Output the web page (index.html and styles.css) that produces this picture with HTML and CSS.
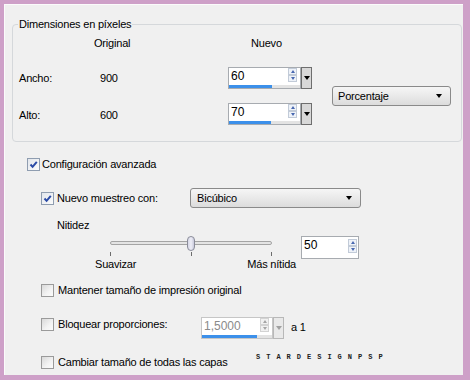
FILE: index.html
```html
<!DOCTYPE html>
<html lang="es">
<head>
<meta charset="utf-8">
<title>Tamaño de imagen</title>
<link rel="stylesheet" href="styles.css">
</head>
<body>
<div class="frame">
  <div class="panel">
    <fieldset class="group">
      <legend>Dimensiones en píxeles</legend>
      <div class="dims">
        <span class="h-orig">Original</span>
        <span class="h-new">Nuevo</span>
        <span class="lbl lbl-w">Ancho:</span>
        <span class="val val-w">900</span>
        <div class="spin spin-w">
          <div class="field">
            <div class="ftop"><span class="num">60</span><span class="arrows"><i class="up"></i><i class="dn"></i></span></div>
            <div class="bar"><b style="width:60%"></b></div>
          </div>
          <div class="ddbtn"><span class="tri"></span></div>
        </div>
        <span class="lbl lbl-h">Alto:</span>
        <span class="val val-h">600</span>
        <div class="spin spin-h">
          <div class="field">
            <div class="ftop"><span class="num">70</span><span class="arrows"><i class="up"></i><i class="dn"></i></span></div>
            <div class="bar"><b style="width:59%"></b></div>
          </div>
          <div class="ddbtn"><span class="tri"></span></div>
        </div>
        <div class="combo unit"><span>Porcentaje</span><span class="tri"></span></div>
      </div>
    </fieldset>

    <div class="row row-config">
      <span class="cb checked"><svg viewBox="0 0 11 11" width="11" height="11"><path d="M2.5 5.5 L4.6 7.8 L8.8 2.8" fill="none" stroke="#2a4aa6" stroke-width="2"/></svg></span>
      <span class="txt">Configuración avanzada</span>
    </div>

    <div class="row row-nuevo">
      <span class="cb checked"><svg viewBox="0 0 11 11" width="11" height="11"><path d="M2.5 5.5 L4.6 7.8 L8.8 2.8" fill="none" stroke="#2a4aa6" stroke-width="2"/></svg></span>
      <span class="txt nuevo-lbl">Nuevo muestreo con:</span>
      <div class="combo method"><span>Bicúbico</span><span class="tri"></span></div>
    </div>

    <div class="row-nit">Nitidez</div>

    <div class="row-sharp">
      <div class="slider">
        <div class="track"><span class="thumb"></span></div>
        <div class="ticks"><i></i><i></i><i></i></div>
        <div class="slabels"><span>Suavizar</span><span>Más nítida</span></div>
      </div>
      <div class="spin spin-sharp">
        <div class="field">
          <div class="ftop"><span class="num">50</span><span class="arrows"><i class="up"></i><i class="dn"></i></span></div>
        </div>
      </div>
    </div>

    <div class="row row-keep">
      <span class="cb"></span>
      <span class="txt">Mantener tamaño de impresión original</span>
    </div>

    <div class="row row-lock">
      <span class="cb"></span>
      <span class="txt lock-lbl">Bloquear proporciones:</span>
      <div class="spin spin-ratio disabled">
        <div class="field">
          <div class="ftop"><span class="num">1,5000</span><span class="arrows"><i class="up"></i><i class="dn"></i></span></div>
          <div class="bar"><b style="width:78%"></b></div>
        </div>
        <div class="ddbtn"><span class="tri"></span></div>
      </div>
      <span class="txt a1">a 1</span>
    </div>

    <div class="row row-all">
      <span class="cb"></span>
      <span class="txt all-lbl">Cambiar tamaño de todas las capas</span>
      <span class="mark">STARDESIGNPSP</span>
    </div>
  </div>
</div>
</body>
</html>
```
FILE: styles.css
```css
* { box-sizing: border-box; }
html, body { margin: 0; padding: 0; }
body {
  width: 470px;
  height: 380px;
  overflow: hidden;
  background: #cea0c8;
  font: 11px/13px "Liberation Sans", Arial, sans-serif;
  letter-spacing: -0.2px;
  color: #000;
}
.frame { padding: 4px 7px 5px 4px; height: 380px; }
.panel {
  height: 371px;
  background: #f0f0f0;
  box-shadow: inset 1px 1px 0 #fbfbfb;
  display: flex;
  flex-direction: column;
}

/* group box */
.group {
  margin: 14px 1px 0 8px;
  padding: 0 0 16px 0;
  border: 1px solid #d5d8db;
  border-radius: 4px;
  min-width: 0;
}
.group legend {
  margin-left: 5px;
  padding: 0 1px;
  line-height: 13px;
}
.dims {
  display: grid;
  grid-template-columns: 67px 62px 86px 84px 1fr;
  grid-template-rows: 24px 12px 22px 14px 22px;
  align-items: center;
}
.h-orig { grid-column: 2; grid-row: 1; padding-left: 14px; }
.h-new { grid-column: 4; grid-row: 1; padding-left: 23px; }
.lbl { grid-column: 1; padding-left: 6px; }
.val { grid-column: 2; padding-left: 20px; }
.lbl-w, .val-w { grid-row: 3; }
.lbl-h, .val-h { grid-row: 5; padding-top: 2px; }
.spin-w { grid-column: 4; grid-row: 3; }
.spin-h { grid-column: 4; grid-row: 5; }
.unit { grid-column: 5; grid-row: 3 / 6; align-self: center; margin-left: 20px; width: 119px; }

/* spin box */
.spin { display: flex; height: 22px; }
.field {
  flex: 1;
  display: flex;
  flex-direction: column;
  background: #fff;
  border: 1px solid #a7abb0;
}
.ftop { flex: 1; display: flex; align-items: flex-start; }
.num { padding: 2px 0 0 2px; line-height: 13px; font-size: 12px; letter-spacing: 0; }
.arrows {
  margin-left: auto;
  margin-right: 3px;
  display: flex;
  flex-direction: column;
  width: 9px;
}
.arrows i {
  display: flex;
  align-items: center;
  justify-content: center;
  height: 7px;
  border: 1px solid #c2cbd8;
  background: #eef2f8;
}
.arrows i::before {
  content: "";
  border-left: 2.5px solid transparent;
  border-right: 2.5px solid transparent;
}
.arrows .up::before { border-bottom: 3px solid #4868b0; }
.arrows .dn::before { border-top: 3px solid #4868b0; }
.bar { height: 3px; background: #e3e3e3; }
.bar b { display: block; height: 3px; background: #3c90ea; }
.ddbtn {
  width: 11px;
  border: 1px solid #6e6e6e;
  background: #d8d8d8;
  display: flex;
  align-items: center;
  justify-content: center;
}
.tri {
  width: 0;
  height: 0;
  border-left: 3.5px solid transparent;
  border-right: 3.5px solid transparent;
  border-top: 4px solid #000;
}
.spin-w .field, .spin-h .field { width: 73px; flex: none; }

.spin-sharp { width: 58px; height: 23px; margin: 1px 0 0 5px; }
.spin-sharp .arrows { margin-top: 2px; margin-right: 1px; }

.spin-ratio { width: 84px; }
.spin-ratio .field { width: 72px; flex: none; border-color: #c6c6c6; }
.spin-ratio .num { color: #8a8a8a; }
.spin-ratio .arrows i { border-color: #d3d3d3; background: #f1f1f1; }
.spin-ratio .arrows .up::before { border-bottom-color: #a5a5a5; }
.spin-ratio .arrows .dn::before { border-top-color: #a5a5a5; }
.spin-ratio .ddbtn { border-color: #b8b8b8; background: #e9e9e9; }
.spin-ratio .ddbtn .tri { border-top-color: #a0a0a0; }

/* combo */
.combo {
  height: 20px;
  display: flex;
  align-items: center;
  justify-content: space-between;
  padding: 0 8px 0 5px;
  border: 1px solid #8a8a8a;
  border-radius: 3px;
  background: linear-gradient(#f6f6f6, #e9e9e9 50%, #dcdcdc);
}
.method { width: 171px; padding-left: 6px; }

/* checkboxes */
.row { display: flex; align-items: center; }
.cb {
  flex: none;
  width: 13px;
  height: 13px;
  border: 1px solid #9a9a9a;
  background: linear-gradient(135deg, #d9d9d9, #f3f3f3 60%, #fbfbfb);
  display: flex;
  align-items: center;
  justify-content: center;
}
.cb.checked { border-color: #8f9db0; background: linear-gradient(135deg, #e2e6ec, #fbfbfb); }
.cb svg { display: block; }

.row-config { margin: 14px 0 0 23px; height: 16px; }
.row-config .txt { margin-left: 2px; }
.row-nuevo { margin: 16px 0 0 37px; height: 20px; }
.nuevo-lbl { margin-left: 3px; width: 133px; }
.row-nit { margin: 10px 0 0 53px; height: 14px; line-height: 14px; }

/* slider */
.row-sharp { display: flex; margin: 3px 0 0 91px; }
.slider { width: 201px; }
.track {
  position: relative;
  margin: 6px 0 0 15px;
  width: 162px;
  height: 4px;
  border: 1px solid #a4a4a4;
  border-radius: 2px;
  background: #e4e4e4;
}
.thumb {
  position: absolute;
  left: 76px;
  top: -6px;
  width: 8px;
  height: 15px;
  border: 1px solid #8a8c99;
  border-radius: 4px;
  background: linear-gradient(90deg, #d6d7e6, #eeeef7 50%, #c8c9db);
}
.ticks { display: flex; height: 4px; margin-top: 7px; }
.ticks i { width: 1px; height: 4px; background: #6c6c6c; }
.ticks i:nth-child(1) { margin-left: 15px; }
.ticks i:nth-child(2) { margin-left: 80px; }
.ticks i:nth-child(3) { margin-left: 79px; }
.slabels { display: flex; justify-content: space-between; margin-top: 2px; }

.row-keep { margin: 11px 0 0 37px; height: 16px; }
.row-keep .txt { margin-left: 4px; }
.row-lock { margin: 19px 0 0 37px; height: 22px; align-items: flex-start; }
.row-lock .cb { margin-top: 1px; }
.lock-lbl { margin: 1px 0 0 4px; width: 143px; }
.a1 { margin: 4px 0 0 6px; }
.row-all { margin: 16px 0 0 37px; height: 14px; }
.all-lbl { margin-left: 4px; width: 198px; }
.mark {
  font: bold 7px/8px "Liberation Mono", monospace;
  letter-spacing: 6px;
  color: #222;
  margin-top: -10px;
}
```
